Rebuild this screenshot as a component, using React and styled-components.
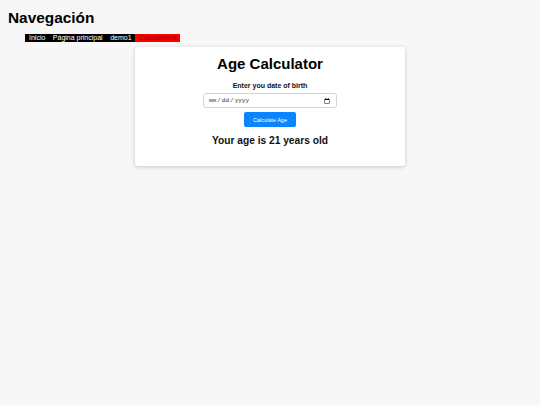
import styled, { createGlobalStyle } from "styled-components";

const GlobalStyle = createGlobalStyle`
  html, body {
    margin: 0;
    background: #f7f7f7;
    font-family: "Liberation Sans", Arial, sans-serif;
  }
`;

const App = () => {
  return (
    <Page>
      <GlobalStyle />
      <Title>Navegación</Title>
      <Nav>
        <NavItem>Inicio</NavItem>
        <NavItem>Página principal</NavItem>
        <NavItem>demo1</NavItem>
        <NavItem $active>Calculadora</NavItem>
      </Nav>
      <Card>
        <CardTitle>Age Calculator</CardTitle>
        <Label>Enter you date of birth</Label>
        <DateInput type="date" />
        <Button>Calculate Age</Button>
        <Result>Your age is 21 years old</Result>
      </Card>
    </Page>
  );
};

export default App;

const Page = styled.div`
  padding: 8px;
  display: flex;
  flex-direction: column;
  align-items: flex-start;
`;

const Title = styled.h1`
  margin: 0;
  font-size: 15.4px;
  line-height: 19px;
  font-weight: bold;
  color: #000;
`;

const Nav = styled.ul`
  display: flex;
  margin: 7px 0 0 17px;
  padding: 0;
  list-style: none;
  background: #000;
`;

const NavItem = styled.li`
  font-size: 7px;
  line-height: 8px;
  padding: 0 3.5px 0 4px;
  color: ${(p) => (p.$active ? "#8a0000" : "#fff")};
  background: ${(p) => (p.$active ? "#ff0000" : "#000")};
`;

const Card = styled.div`
  align-self: center;
  width: 270px;
  margin-top: 5px;
  box-sizing: border-box;
  padding: 8px 0 19px;
  background: #fff;
  border-radius: 3px;
  box-shadow: 0 1px 4px rgba(0, 0, 0, 0.2);
  display: flex;
  flex-direction: column;
  align-items: center;
`;

const CardTitle = styled.h2`
  margin: 0;
  font-size: 15px;
  line-height: 18px;
  font-weight: bold;
  color: #000;
`;

const Label = styled.label`
  margin-top: 7.5px;
  font-size: 7px;
  line-height: 9px;
  font-weight: bold;
  color: #111;
`;

const DateInput = styled.input`
  margin-top: 3.5px;
  width: 134px;
  height: 15px;
  box-sizing: border-box;
  padding: 0 4px;
  font-family: "Liberation Mono", monospace;
  font-size: 6px;
  border: 1px solid #d4d4d4;
  border-radius: 3px;
  color: #333;
  background: #fff;
`;

const Button = styled.button`
  margin-top: 4px;
  width: 52px;
  height: 15px;
  padding: 0;
  border: none;
  border-radius: 2px;
  background: #0a84ff;
  color: #fff;
  font-family: "Liberation Sans", Arial, sans-serif;
  font-size: 5.5px;
`;

const Result = styled.h3`
  margin: 8px 0 0;
  font-size: 10.2px;
  line-height: 12px;
  font-weight: bold;
  color: #111;
`;
